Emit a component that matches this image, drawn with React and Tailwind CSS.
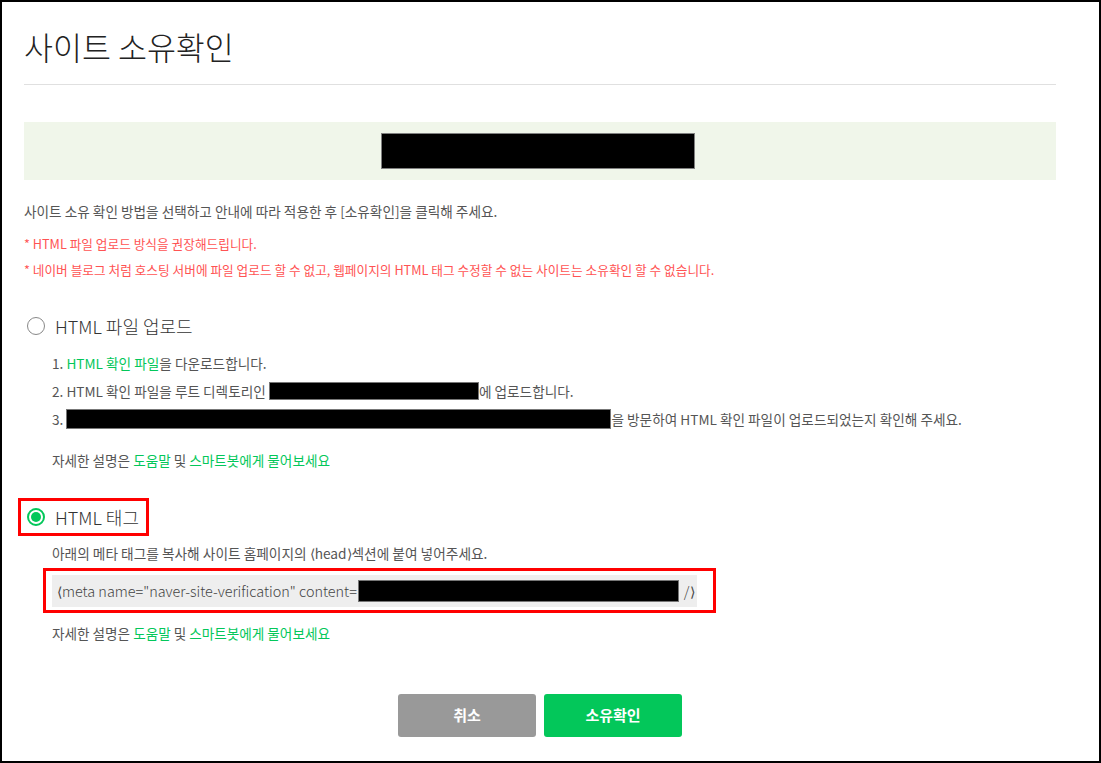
import React from "react";

const F = "font-['Noto_Sans_CJK_KR','Noto_Sans',sans-serif]";

function Help() {
  return (
    <div className="text-[13.6px] leading-[20px] text-[#555] whitespace-nowrap">
      자세한 설명은 <span className="text-[#03c75a]">도움말</span> 및{" "}
      <span className="text-[#03c75a]">스마트봇에게 물어보세요</span>
    </div>
  );
}

function Redact({ w, h }) {
  return <span className={`inline-block bg-black border border-[#777] align-middle ${w} ${h}`} />;
}

export default function App() {
  return (
    <div className={`${F} w-[1101px] h-[763px] border-2 border-black bg-white box-border overflow-hidden`}>
      <div className="pl-[22px] w-[1054px]">
        <div className="pt-[24px] pb-[18px] border-b border-[#e0e0e0]">
          <h1 className="text-[31.5px] leading-[40px] font-light text-[#222]">사이트 소유확인</h1>
        </div>

        <div className="mt-[37px] h-[58px] bg-[#f0f6ea] flex items-center justify-center">
          <div className="w-[314px] h-[36px] bg-black border border-[#808080] -ml-[4px]" />
        </div>

        <p className="mt-[21px] text-[13.65px] leading-[20px] text-[#555] whitespace-nowrap">
          사이트 소유 확인 방법을 선택하고 안내에 따라 적용한 후 [소유확인]을 클릭해 주세요.
        </p>
        <div className="mt-[10px] text-[12.7px] leading-[26px] text-[#ff5353] whitespace-nowrap">
          <p>* HTML 파일 업로드 방식을 권장해드립니다.</p>
          <p>* 네이버 블로그 처럼 호스팅 서버에 파일 업로드 할 수 없고, 웹페이지의 HTML 태그 수정할 수 없는 사이트는 소유확인 할 수 없습니다.</p>
        </div>

        <div className="mt-[29px] h-[28px] flex items-center">
          <span className="ml-[3px] w-[18px] h-[18px] rounded-full border-[1.5px] border-[#888] box-border" />
          <span className="ml-[10px] text-[18px] font-light text-[#333]">HTML 파일 업로드</span>
        </div>

        <div className="mt-[9px] pl-[28px] text-[13.65px] leading-[28px] text-[#555] whitespace-nowrap">
          <div>
            1. <span className="text-[#03c75a]">HTML 확인 파일</span>을 다운로드합니다.
          </div>
          <div className="flex items-center">
            2. HTML 확인 파일을 루트 디렉토리인&nbsp;<Redact w="w-[210px]" h="h-[18px]" />에 업로드합니다.
          </div>
          <div className="flex items-center">
            3.&nbsp;<Redact w="w-[545px]" h="h-[20px]" />을 방문하여 HTML 확인 파일이 업로드되었는지 확인해 주세요.
          </div>
          <div className="mt-[17px]">
            <Help />
          </div>
        </div>

        <div className="mt-[28px] -ml-[6px] w-[131px] h-[38px] border-[3px] border-[#ff0000] box-border flex items-center">
          <span className="ml-[6px] w-[18px] h-[18px] rounded-full border-2 border-[#03c75a] box-border flex items-center justify-center">
            <span className="w-[10px] h-[10px] rounded-full bg-[#03c75a]" />
          </span>
          <span className="ml-[10px] text-[18px] font-light text-[#333]">HTML 태그</span>
        </div>

        <div className="pl-[28px]">
          <p className="mt-[7px] text-[13.7px] leading-[20px] text-[#555] whitespace-nowrap">
            아래의 메타 태그를 복사해 사이트 홈페이지의 ⟨head⟩섹션에 붙여 넣어주세요.
          </p>
          <div className="mt-[5px] -ml-[9px] w-[673px] h-[45px] border-[3px] border-[#ff0000] box-border pl-[6px] pr-[16px] pt-[4px]">
            <div className="h-[32px] bg-[#eeeeee] flex items-center pl-[5px] text-[14.4px] font-light text-[#444] whitespace-nowrap">
              <span>⟨meta name="naver-site-verification" content=</span>
              <span className="inline-block w-[321px] h-[22px] bg-black border border-[#777] ml-[1px] mr-[5px]" />
              <span>/⟩</span>
            </div>
          </div>
          <div className="mt-[10px]">
            <Help />
          </div>
        </div>

        <div className="mt-[51px] flex justify-center gap-[8px]">
          <button className="w-[138px] h-[43px] rounded-[3px] bg-[#999] text-white text-[15px] font-bold">취소</button>
          <button className="w-[138px] h-[43px] rounded-[3px] bg-[#03c75a] text-white text-[15px] font-bold">소유확인</button>
        </div>
      </div>
    </div>
  );
}
